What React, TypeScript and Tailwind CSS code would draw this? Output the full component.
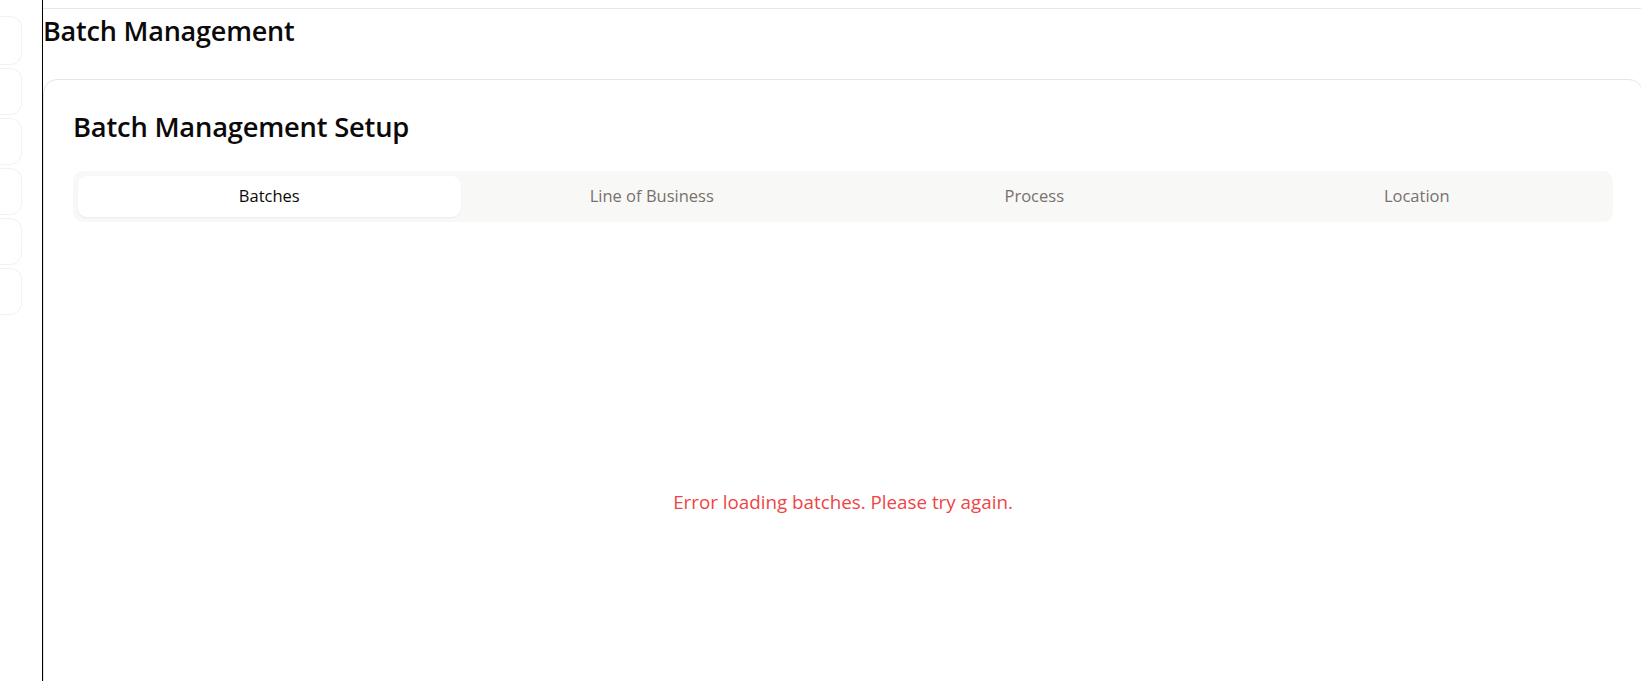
import React from "react";

const tabs = ["Batches", "Line of Business", "Process", "Location"];

function SideRail() {
    // collapsed sidebar, only the right edges of the nav buttons show
    return (
        <aside className="w-[43px] shrink-0 h-screen border-r border-black overflow-hidden">
            <div className="flex flex-col gap-[3px] pt-[16px]">
                {[0, 1, 2, 3, 4, 5].map((i) => (
                    <div
                        key={i}
                        className={`w-[22px] ${i === 0 ? "h-[49px]" : "h-[47px]"} rounded-r-xl border border-l-0 border-[#f3f2f1] bg-white`}
                    />
                ))}
            </div>
        </aside>
    );
}

export default function App() {
    const [active, setActive] = React.useState(0);
    return (
        <div
            className="flex w-full h-screen overflow-hidden bg-white text-[#0c0a09]"
            style={{ fontFamily: '"Open Sans", "Noto Sans", sans-serif' }}
        >
            <SideRail />
            <main className="flex-1 min-w-0 flex flex-col">
                <div className="h-[9px] border-b border-[#e7e7e7] shrink-0" />
                <h1 className="text-[27px] leading-[36px] font-semibold tracking-[-0.2px] mt-[4px]">Batch Management</h1>
                <div className="mt-[30px] w-[1600px] min-h-[800px] shrink-0 rounded-[14px] border border-[#e7e5e4] bg-white px-[29px] pt-[29px]">
                    <h2 className="text-[27.3px] leading-[36px] font-semibold tracking-[-0.2px]">Batch Management Setup</h2>
                    <div className="mt-[26px] w-full h-[51px] rounded-[10px] bg-[#f8f8f7] p-[5px] grid grid-cols-4">
                        {tabs.map((t, i) => (
                            <button
                                key={t}
                                onClick={() => setActive(i)}
                                className={
                                    i === active
                                        ? "rounded-[9px] bg-white text-[16.5px] font-medium text-[#0c0a09] shadow-[0_1px_2px_rgba(0,0,0,0.06)]"
                                        : "rounded-[9px] text-[16.5px] font-medium text-[#78716c]"
                                }
                            >
                                {t}
                            </button>
                        ))}
                    </div>
                    <div className="flex justify-center pt-[267px]">
                        <p className="text-[18.8px] leading-[26px] text-[#ef4444]">Error loading batches. Please try again.</p>
                    </div>
                </div>
            </main>
        </div>
    );
}
